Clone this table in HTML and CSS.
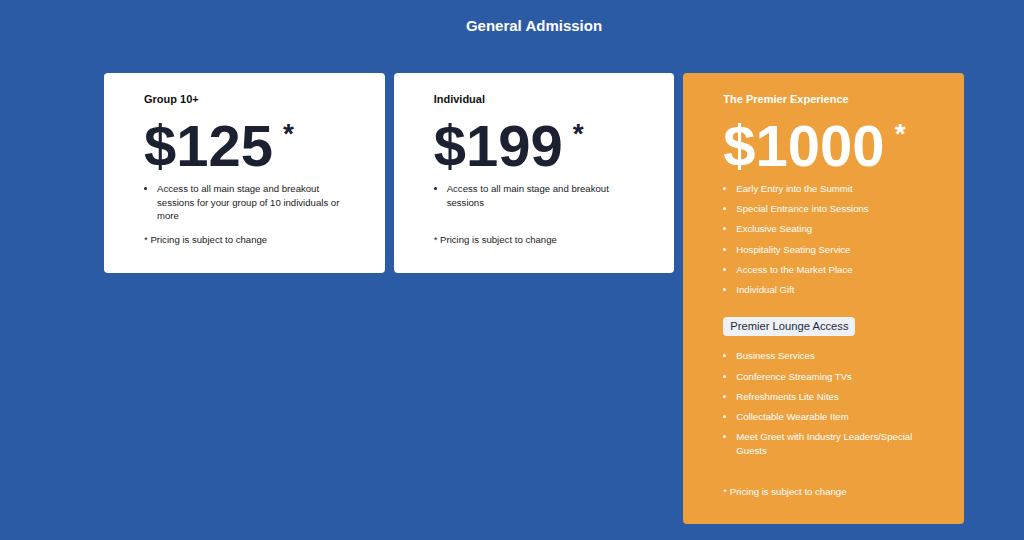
FILE: index.html
```html
<!DOCTYPE html>
<html lang="en">
<head>
    <meta charset="UTF-8">
    <meta name="viewport" content="width=device-width, initial-scale=1.0">
    <title>General Admission</title>
    <link rel="stylesheet" href="styles.css">
</head>
<body>
    <div class="page">
        <h1 class="title">General Admission</h1>
        <div class="plans">
            <div class="plan">
                <h2 class="plan-name">Group 10+</h2>
                <div class="plan-price">$125<span class="star">*</span></div>
                <ul class="plan-list">
                    <li>Access to all main stage and breakout sessions for your group of 10 individuals or more</li>
                </ul>
                <p class="note">* Pricing is subject to change</p>
            </div>
            <div class="plan">
                <h2 class="plan-name">Individual</h2>
                <div class="plan-price">$199<span class="star">*</span></div>
                <ul class="plan-list">
                    <li>Access to all main stage and breakout sessions</li>
                </ul>
                <p class="note">* Pricing is subject to change</p>
            </div>
            <div class="plan plan-premier">
                <h2 class="plan-name">The Premier Experience</h2>
                <div class="plan-price">$1000<span class="star">*</span></div>
                <ul class="plan-list">
                    <li>Early Entry into the Summit</li>
                    <li>Special Entrance into Sessions</li>
                    <li>Exclusive Seating</li>
                    <li>Hospitality Seating Service</li>
                    <li>Access to the Market Place</li>
                    <li>Individual Gift</li>
                </ul>
                <div class="badge">Premier Lounge Access</div>
                <ul class="plan-list list-lounge">
                    <li>Business Services</li>
                    <li>Conference Streaming TVs</li>
                    <li>Refreshments Lite Nites</li>
                    <li>Collectable Wearable Item</li>
                    <li>Meet Greet with Industry Leaders/Special Guests</li>
                </ul>
                <p class="note">* Pricing is subject to change</p>
            </div>
        </div>
    </div>
</body>
</html>
```

FILE: styles.css
```css
body {
    margin: 0;
    background: #2c5ba5;
    font-family: "Liberation Sans", Arial, sans-serif;
}
.page {
    width: 860px;
    margin-left: 104px;
}
.title {
    margin: 0;
    padding-top: 17px;
    color: #fff;
    font-size: 15px;
    line-height: 18px;
    text-align: center;
}
.plans {
    display: flex;
    align-items: flex-start;
    gap: 9px;
    margin-top: 38px;
}
.plan {
    width: 281px;
    box-sizing: border-box;
    padding: 20px 40px 26px;
    background: #fff;
    border-radius: 4px;
    color: #222;
}
.plan-name {
    margin: 0;
    font-size: 11px;
    line-height: 13px;
    color: #111;
}
.plan-price {
    margin-top: 11px;
    font-size: 58px;
    font-weight: bold;
    line-height: 58px;
    color: #1b2130;
}
.star {
    display: inline-block;
    margin-left: 10px;
    padding-top: 3px;
    font-size: 28px;
    line-height: 28px;
    vertical-align: top;
}
.plan-list {
    min-height: 40.5px;
    margin: 7px 0 0;
    padding-left: 13px;
    font-size: 9.6px;
    line-height: 13.5px;
}
.plan-list li + li {
    margin-top: 6.7px;
}
.note {
    margin: 10.7px 0 0;
    font-size: 9.6px;
    line-height: 13.5px;
}
.plan-premier {
    background: #eea03c;
    color: #fff;
}
.plan-premier .plan-name,
.plan-premier .plan-price {
    color: #fff;
}
.plan-premier .note {
    margin-top: 27.5px;
}
.badge {
    width: fit-content;
    margin-top: 21px;
    padding: 3px 6px 3px 7px;
    background: #eef2f7;
    border-radius: 4px;
    color: #1f2937;
    font-size: 11.2px;
    line-height: 13px;
}
.list-lounge {
    margin-top: 13px;
}
```
